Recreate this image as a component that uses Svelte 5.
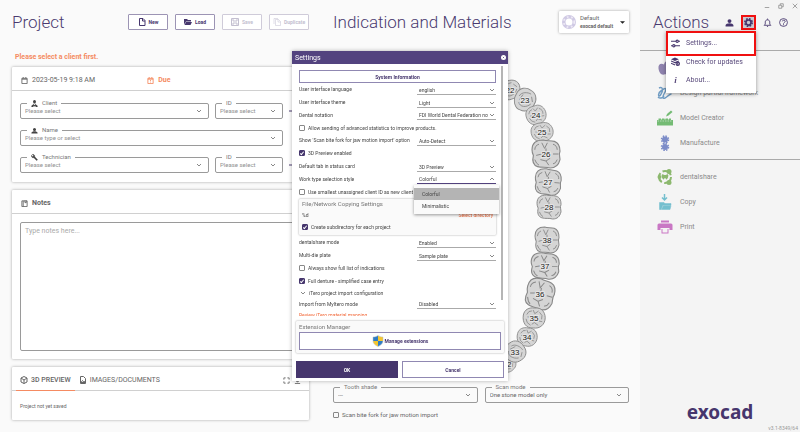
<script>
	let theme = $state('Light');
	let workStyle = $state('Colorful');
	let listOpen = $state(true);
	let menuOpen = $state(true);
	let dialogOpen = $state(true);
	let notes = $state('');
	let biteFork = $state(false);

	const teeth = [
		{ n: 32, x: 187, y: 320, rx: 9, ry: 9, kind: 'front', turn: 30 },
		{ n: 22, x: 190, y: 46, rx: 11, ry: 10, kind: 'front', turn: -25 },
		{ n: 23, x: 205, y: 56, rx: 11, ry: 12, kind: 'front', turn: 15 },
		{ n: 24, x: 216, y: 71, rx: 10, ry: 10, kind: 'small', turn: -10 },
		{ n: 25, x: 222, y: 88, rx: 11, ry: 10, kind: 'small', turn: 0 },
		{ n: 26, x: 226, y: 110, rx: 14, ry: 14, kind: 'molar', turn: 0 },
		{ n: 27, x: 228, y: 138, rx: 13, ry: 13, kind: 'molar', turn: 5 },
		{ n: 28, x: 229, y: 163, rx: 12, ry: 12, kind: 'molar', turn: 0 },
		{ n: 38, x: 227, y: 196, rx: 12, ry: 13, kind: 'molar', turn: 0 },
		{ n: 37, x: 225, y: 222, rx: 14, ry: 13, kind: 'molar', turn: 3 },
		{ n: 36, x: 220, y: 250, rx: 14, ry: 15, kind: 'molar', turn: 15 },
		{ n: 35, x: 214, y: 274, rx: 11, ry: 11, kind: 'small', turn: 10 },
		{ n: 34, x: 207, y: 293, rx: 10, ry: 10, kind: 'small', turn: 15 },
		{ n: 33, x: 195, y: 308, rx: 11, ry: 11, kind: 'front', turn: 40 },
	];

	const outlines = {
		front: 'M-9-3C-8-9-2-11 3-9 8-8 11-3 9 2 8 7 3 10-2 9-7 9-11 3-9-3Z',
		small: 'M-10-1C-10-6-6-9-1-9 5-11 9-7 10-2 11 4 7 9 1 9-5 11-10 6-10-1Z',
		molar: 'M-10-3C-10-8-7-10-2-10 1-9 3-10 6-9 9-8 10-6 10-2 9 0 10 2 10 4 9 8 7 10 3 10 0 9-3 10-6 9-9 8-10 5-9 1Q-10-1-10-3Z',
	};

	const creases = {
		front: 'M-6-2C-5-6 1-7 4-6M-5 3C-3 7 3 6 6 2M5-4L7 0M-3-4L-5 1',
		small: 'M-7-2Q-6-6-3-6M-2-7L0-4 3-7M4-6Q8-4 7 0M-7 2Q-6 6-2 7M-1 6L1 4 5 6M-6 0H-3M5 2H8',
		molar: 'M-8-3Q-8-6-5-7M-3-8L-1-4 1-8M0-4V-2M5-7Q8-6 8-3M-8 4Q-7 7-5 8M-4 4L0 5 2 8M0 5L3 3M5 7Q7 7 8 4M-7 1L-3 0M5 0H9',
	};

	// the open menu hides the first entry, so it has no caption of its own
	const actions = [
		{ icon: 'apple', label: '', color: '#8f83ae' },
		{ icon: 'partial', label: 'Design partial framework', color: '#6f9bc2' },
		{ icon: 'model', label: 'Model Creator', color: '#74bb74' },
		{ icon: 'make', label: 'Manufacture', color: '#7c8cc8' },
	];
	const sharing = [
		{ icon: 'share', label: 'dentalshare', color: '#8cb86e' },
		{ icon: 'copy', label: 'Copy', color: '#74bfce' },
		{ icon: 'print', label: 'Print', color: '#c977c4' },
	];
</script>

{#snippet chevron()}
	<svg class="chev" viewBox="0 0 8 8" aria-hidden="true"><path d="M2 3l2 2 2-2" /></svg>
{/snippet}

{#snippet personIcon()}
	<path d="M8 2a3.500 3.500 0 1 0 0 7 3.500 3.500 0 0 0 0-7zM1 15v-2c0-2 4-3.500 7-3.500s7 1.500 7 3.500v2z" fill="currentColor" />
{/snippet}

{#snippet field(id, label, icon, value)}
	<fieldset class="field">
		<legend>
			{#if icon}
				<svg class="legend-icon" viewBox="0 0 16 16" aria-hidden="true">
					{#if icon === 'person'}
						{@render personIcon()}
					{:else if icon === 'client'}
						<path d="M8 0a3.500 3.500 0 0 0-3 5l1 3h4l1-3a3.500 3.500 0 0 0-3-5zM1 16v-3l5-4 2 3 2-3 5 4v3h-5l1-3-3 2-3-2 1 3z" fill="currentColor" />
					{:else}
						<path d="M15 13L8.500 6.500A4.500 4.500 0 0 0 3 1l3 3-2 2-3-3a4.500 4.500 0 0 0 5.500 5.500L13 15z" fill="currentColor" stroke="currentColor" />
					{/if}
				</svg>
			{/if}
			<label for={id}>{label}</label>
		</legend>
		<div class="picker">
			<select {id}><option>{value}</option></select>
			{@render chevron()}
		</div>
	</fieldset>
{/snippet}

{#snippet row(id, label, value)}
	<div class="row">
		<label for={id}>{label}</label>
		<div class="line-select">
			<select {id}><option>{value}</option></select>
			{@render chevron()}
		</div>
	</div>
{/snippet}

{#snippet check(label, checked)}
	<label class="check"><input type="checkbox" {checked} />{label}</label>
{/snippet}

{#snippet action(item)}
	<li>
		<button class="action">
			<svg viewBox="0 0 32 32" style="color: {item.color}" aria-hidden="true">
				{#if item.icon === 'apple'}
					<path d="M14 9C7 5 2 10 3 17c1 8 6 14 11 12 3-1 4-1 7 0 6 0 9-9 9-13 0-6-6-10-12-7 0-4 2-5 3-7-4 0-6 3-7 7z" fill="currentColor" />
				{:else if item.icon === 'partial'}
					<path d="M4 6c8-4 9 6 3 14-5 6-6-4 2-9 8-6 11-5 7 3-5 9-6 14 0 12 5-2 8-8 13-8M2 24c4 4 9 2 12-2M19 7c6-3 9 1 5 6" fill="none" stroke="currentColor" stroke-width="3" />
				{:else if item.icon === 'model'}
					<path d="M0 20h3v-3h5v2h2v-2h5v2h2v-2h5v2h2v-2h4v3h4v11H0z" fill="currentColor" />
					<path d="M18 13l2-5 8-7 3 3-8 7z" fill="currentColor" />
					<path d="M1 22h30" stroke="#f4f4f4" stroke-dasharray="3 2" />
				{:else if item.icon === 'make'}
					<circle cx="16" cy="9" r="6" fill="currentColor" />
					<circle cx="16" cy="9" r="7" fill="none" stroke="currentColor" stroke-width="3" stroke-dasharray="3 2.500" />
					<circle cx="16" cy="24" r="6" fill="currentColor" />
					<circle cx="16" cy="24" r="7" fill="none" stroke="currentColor" stroke-width="3" stroke-dasharray="3 2.500" />
				{:else if item.icon === 'share'}
					<circle cx="16" cy="16" r="12" fill="none" stroke="currentColor" stroke-width="4" stroke-dasharray="20 5" />
					<circle cx="5" cy="16" r="4" fill="currentColor" />
					<circle cx="24" cy="5" r="5" fill="currentColor" />
					<circle cx="24" cy="27" r="5" fill="currentColor" />
					<path d="M10 11c2-2 4 1 6 1s4-3 6-1-1 10-3 10-1-3-3-3-1 3-3 3-5-8-3-10z" fill="currentColor" />
				{:else if item.icon === 'copy'}
					<path d="M15 0v11M10 7l5 5 5-5" fill="none" stroke="currentColor" stroke-width="3" />
					<path d="M5 31V17h9l2 2h12v3H12L8 31zM9 31l4-8h15l-2 8z" fill="currentColor" stroke="currentColor" />
				{:else}
					<path d="M8 3h16v4H8zM4 9h24q3 0 3 3v10h-6v-4H7v4H1V12q0-3 3-3zM9 20h14v9H9z" fill="currentColor" />
					<path d="M11 20h10v7H11z" fill="#f4f4f4" />
				{/if}
			</svg>
			{item.label}
		</button>
	</li>
{/snippet}

<div class="app">
	<section class="project">
		<header class="head">
			<h1>Project</h1>
			<div class="toolbar">
				<button>
					<svg viewBox="0 0 16 16" aria-hidden="true"><path d="M3 1h7l4 4v10H3zM9 1v5h5" fill="none" stroke="currentColor" stroke-width="2" /></svg>
					New
				</button>
				<button>
					<svg viewBox="0 0 16 16" aria-hidden="true"><path d="M0 13V2h6l2 2h6v3H4zM1 14l3-6h12l-3 6z" fill="currentColor" /></svg>
					Load
				</button>
				<button disabled>
					<svg viewBox="0 0 16 16" aria-hidden="true"><path d="M1 1h14v14H1zM4 1v5h8V1M4 15v-5h8v5" fill="none" stroke="currentColor" stroke-width="2" /></svg>
					Save
				</button>
				<button disabled>
					<svg viewBox="0 0 16 16" aria-hidden="true"><path d="M5 3h6l4 4v8H5zM2 12V1h8M10 3v5h5" fill="none" stroke="currentColor" /></svg>
					Duplicate
				</button>
			</div>
		</header>

		<p class="warning">Please select a client first.</p>

		<div class="card">
			<div class="card-head dates">
				<span>
					<svg viewBox="0 0 16 16" aria-hidden="true"><path d="M2 3h12v12H2zM2 5h12M5 0v3M11 0v3" fill="none" stroke="currentColor" stroke-width="2" /></svg>
					2023-05-19 9:18 AM
				</span>
				<span class="due">
					<svg viewBox="0 0 16 16" aria-hidden="true"><path d="M2 3h12v12H2zM2 5h12M5 0v3M11 0v3M8 7v3M8 12v1" fill="none" stroke="currentColor" stroke-width="2" /></svg>
					Due
				</span>
			</div>
			<div class="fields">
				<div class="pair">
					{@render field('client', 'Client', 'client', 'Please select')}
					{@render field('client-id', 'ID', '', 'Please select')}
					<button class="add" aria-label="Add client">
						<svg viewBox="0 0 8 8" aria-hidden="true"><path d="M0 4h8M4 0v8" /></svg>
					</button>
				</div>
				<div class="pair single">
					{@render field('name', 'Name', 'person', 'Please type or select')}
				</div>
				<div class="pair">
					{@render field('technician', 'Technician', 'wrench', 'Please select')}
					{@render field('technician-id', 'ID', '', 'Please select')}
					<button class="add" aria-label="Add technician">
						<svg viewBox="0 0 8 8" aria-hidden="true"><path d="M0 4h8M4 0v8" /></svg>
					</button>
				</div>
			</div>
		</div>

		<div class="card notes">
			<div class="card-head">
				<svg viewBox="0 0 16 16" aria-hidden="true"><path d="M2 2h12v13H2zM5 2v13M9 1v5h3V1" fill="none" stroke="currentColor" stroke-width="2" /></svg>
				<label for="notes">Notes</label>
			</div>
			<textarea id="notes" placeholder="Type notes here..." bind:value={notes}></textarea>
		</div>

		<div class="card preview">
			<div class="tabs">
				<button class="tab active">
					<svg viewBox="0 0 16 16" aria-hidden="true"><path d="M8 1l6 3v8l-6 3-6-3V4zM2 4l6 4 6-4M8 8v7" fill="none" stroke="currentColor" stroke-width="2" /></svg>
					3D PREVIEW
				</button>
				<button class="tab">
					<svg viewBox="0 0 16 16" aria-hidden="true"><path d="M3 1h6l4 4v10H3zM4 13l3-4 2 2 1-1 2 3z" fill="none" stroke="currentColor" stroke-width="2" /></svg>
					IMAGES/DOCUMENTS
				</button>
				<button class="tool" aria-label="Full screen">
					<svg viewBox="0 0 16 16" aria-hidden="true"><path d="M2 6V2h4M10 2h4v4M14 10v4h-4M6 14H2v-4" fill="none" stroke="currentColor" stroke-width="2" /></svg>
				</button>
				<button class="tool" aria-label="Preview options">
					<svg viewBox="0 0 16 16" aria-hidden="true"><path d="M8 2v9M4 8l4 4 4-4M2 15h12" fill="none" stroke="currentColor" stroke-width="2" /></svg>
				</button>
			</div>
			<p>Project not yet saved</p>
		</div>
	</section>

	<section class="indication">
		<header class="head">
			<h1>Indication and Materials</h1>
			<button class="template">
				<svg class="disc" viewBox="0 0 16 16" aria-hidden="true">
					<circle cx="8" cy="8" r="6" />
					<circle class="holes" cx="8" cy="8" r="6" />
				</svg>
				<span>Default<b>exocad default</b></span>
				<svg class="drop" viewBox="0 0 8 8" aria-hidden="true"><path d="M0 2h8L4 6z" /></svg>
			</button>
		</header>

		<svg class="teeth" viewBox="0 0 320 339" aria-label="Tooth chart">
			{#each teeth as t}
				<g transform="translate({t.x} {t.y})">
					<g transform="rotate({t.turn}) scale({t.rx / 10} {t.ry / 10})">
						<path class="outline" d={outlines[t.kind]} />
						<path class="crease" d={creases[t.kind]} />
					</g>
					<text y="3">{t.n}</text>
				</g>
			{/each}
		</svg>

		<div class="scan">
			{@render field('shade', 'Tooth shade', '', '---')}
			{@render field('scan-mode', 'Scan mode', '', 'One stone model only')}
		</div>
		<label class="check bite">
			<input type="checkbox" bind:checked={biteFork} />Scan bite fork for jaw motion import
		</label>
	</section>

	<aside>
		<header class="head">
			<div class="window-buttons">
				<button aria-label="Minimize"><svg viewBox="0 0 8 8"><path d="M1 6h6" /></svg></button>
				<button aria-label="Restore"><svg viewBox="0 0 8 8"><path d="M1 3h4v4H1zM3 3V1h4v4H5" /></svg></button>
				<button aria-label="Close"><svg viewBox="0 0 8 8"><path d="M1 1l6 6M7 1L1 7" /></svg></button>
			</div>
			<h1>Actions</h1>
			<div class="icons">
				<button aria-label="User"><svg viewBox="0 0 16 16">{@render personIcon()}</svg></button>
				<div class="gear-wrap">
					<button class="gear" aria-label="Options" aria-expanded={menuOpen} onclick={() => (menuOpen = !menuOpen)}>
						<svg viewBox="0 0 16 16">
							<circle cx="8" cy="8" r="4.500" fill="none" stroke="currentColor" stroke-width="3" />
							<circle cx="8" cy="8" r="6.500" fill="none" stroke="currentColor" stroke-width="3" stroke-dasharray="3 2.100" />
						</svg>
					</button>
					{#if menuOpen}
						<div class="menu">
							<button class="marked" onclick={() => (dialogOpen = true)}>
								<svg viewBox="0 0 16 16" aria-hidden="true"><path d="M0 4h9M13 4h3M0 12h3M7 12h9" /><circle cx="11" cy="4" r="2" /><circle cx="5" cy="12" r="2" /></svg>
								Settings...
							</button>
							<button>
								<svg viewBox="0 0 16 16" aria-hidden="true"><path class="solid" d="M0 4l7-3 7 3-7 3zM0 6l7 3 7-3v2l-7 3-7-3zM0 10l7 3v2l-7-3z" /><circle cx="12" cy="12" r="3" /><path d="M12 10v3l1 1" /></svg>
								Check for updates
							</button>
							<button>
								<i>i</i>
								About...
							</button>
						</div>
					{/if}
				</div>
				<button aria-label="Notifications"><svg viewBox="0 0 16 16"><path d="M2 13h12l-2-2V7c0-5-8-5-8 0v4zM8 1v2M7 15h2" fill="none" stroke="currentColor" stroke-width="1.500" /></svg></button>
				<button aria-label="Help"><svg viewBox="0 0 16 16"><path d="M6 6c0-3 5-3 5 0 0 2-3 2-3 4M8 11v2" fill="none" stroke="currentColor" stroke-width="1.500" /><circle cx="8" cy="8" r="7" fill="none" stroke="currentColor" stroke-width="1.500" /></svg></button>
			</div>
		</header>
		<ul class="first">
			{#each actions as item}
				{@render action(item)}
			{/each}
		</ul>
		<ul>
			{#each sharing as item}
				{@render action(item)}
			{/each}
		</ul>
		<footer>
			<strong>exocad</strong>
			<small>v3.1-8349/64</small>
		</footer>
	</aside>
</div>

{#if dialogOpen}
	<div class="overlay">
		<div class="dialog" role="dialog" aria-labelledby="dialog-title">
			<div class="title">
				<h2 id="dialog-title">Settings</h2>
				<button aria-label="Close settings" onclick={() => (dialogOpen = false)}>
					<svg viewBox="0 0 8 8"><circle cx="4" cy="4" r="4" /><path d="M3 3l2 2M5 3L3 5" /></svg>
				</button>
			</div>
			<div class="scroll">
				<button class="outlined">System Information</button>
				<div class="rows main">
					{@render row('language', 'User interface language', 'english')}
					{@render row('theme', 'User interface theme', theme)}
					{@render row('notation', 'Dental notation', 'FDI World Dental Federation notation')}
					{@render check('Allow sending of advanced statistics to improve products.', false)}
					{@render row('jaw', "Show 'Scan bite fork for jaw motion import' option", 'Auto-Detect')}
					{@render check('3D Preview enabled', true)}
					{@render row('tab', 'Default tab in status card', '3D Preview')}
					<div class="row">
						<span id="work-label">Work type selection style</span>
						<div class="line-select open">
							<button aria-labelledby="work-label" aria-expanded={listOpen} onclick={() => (listOpen = !listOpen)}>
								{workStyle}
								<svg class="chev" viewBox="0 0 8 8" aria-hidden="true"><path d="M2 5l2-2 2 2" /></svg>
							</button>
							{#if listOpen}
								<div class="list">
									{#each ['Colorful', 'Minimalistic'] as name}
										<button class:chosen={name === workStyle} onclick={() => (workStyle = name)}>{name}</button>
									{/each}
								</div>
							{/if}
						</div>
					</div>
					{@render check('Use smallest unassigned client ID as new client', false)}
				</div>
				<div class="group">
					<h3>File/Network Copying Settings</h3>
					<div class="path"><span>%d</span><a href="#directory">Select directory</a></div>
					{@render check('Create subdirectory for each project', true)}
				</div>
				<div class="rows more">
					{@render row('share-mode', 'dentalshare mode', 'Enabled')}
					{@render row('plate', 'Multi-die plate', 'Sample plate')}
					{@render check('Always show full list of indications', false)}
					{@render check('Full denture - simplified case entry', true)}
				</div>
				<div class="rows last">
					<button class="expand">{@render chevron()}iTero project import configuration</button>
					{@render row('myitero', 'Import from MyItero mode', 'Disabled')}
					<a href="#mapping">Review iTero material mapping</a>
				</div>
				<div class="thumb"></div>
			</div>
			<div class="group manager">
				<h3>Extension Manager</h3>
				<button class="outlined">
					<svg viewBox="0 0 24 24" aria-hidden="true">
						<path d="M12 1C9 3 5 4 2 4v8h10z" fill="#2f7dc4" />
						<path d="M12 1c3 2 7 3 10 3v8H12z" fill="#f4c62f" />
						<path d="M2 12c0 5 5 9 10 11V12z" fill="#f4c62f" />
						<path d="M22 12c0 5-5 9-10 11V12z" fill="#2f7dc4" />
						<path d="M12 1C9 3 5 4 2 4v8c0 5 5 9 10 11 5-2 10-6 10-11V4c-3 0-7-1-10-3z" fill="none" stroke="#b9bcc0" />
					</svg>
					Manage extensions
				</button>
			</div>
			<div class="buttons">
				<button class="ok" onclick={() => (dialogOpen = false)}>OK</button>
				<button class="outlined" onclick={() => (dialogOpen = false)}>Cancel</button>
			</div>
		</div>
	</div>
{/if}

<style>
	:global(body) {
		margin: 0;
		background: #fafafa;
	}
	.app,
	.overlay {
		font-family: Roboto, 'Liberation Sans', sans-serif;
		font-size: 6px;
		line-height: 8px;
		color: #666;
	}
	.app *,
	.overlay * {
		box-sizing: border-box;
	}
	.app {
		display: grid;
		grid-template-columns: minmax(0, 1fr) minmax(0, 1fr) 20%;
		min-height: 100vh;
	}
	button,
	select,
	textarea {
		font: inherit;
		color: inherit;
		background: none;
		border: 0;
		padding: 0;
		margin: 0;
		border-radius: 0;
	}
	button {
		display: flex;
		align-items: center;
		cursor: pointer;
	}
	select {
		appearance: none;
		flex: 1;
		min-width: 0;
		outline: none;
	}
	svg {
		display: block;
		flex: none;
	}
	p,
	h1,
	h2,
	h3,
	ul {
		margin: 0;
		padding: 0;
		font-weight: 400;
	}
	h1 {
		font-size: 17px;
		line-height: 20px;
		font-weight: 300;
		color: #4a3a70;
		white-space: nowrap;
	}
	.head {
		display: flex;
		align-items: center;
		justify-content: space-between;
		height: 44px;
	}
	.project {
		display: flex;
		flex-direction: column;
		padding: 0 11px 12px 12px;
	}
	.toolbar {
		display: flex;
		gap: 7px;
	}
	.toolbar button {
		justify-content: center;
		gap: 3px;
		width: 40px;
		height: 16px;
		border: 1px solid #9c94b4;
		border-radius: 1px;
		font-size: 5px;
		font-weight: 700;
		color: #46366d;
		background: #fff;
	}
	.toolbar button:disabled {
		color: #c3bfd0;
		border-color: #cfcbd9;
	}
	.toolbar svg {
		width: 8px;
		height: 8px;
	}
	.warning {
		margin: 8px 3px 5px;
		line-height: 10px;
		font-size: 7px;
		font-weight: 700;
		color: #f58b62;
	}
	.card {
		background: #fff;
		border-radius: 1px;
		box-shadow: 0 0 3px rgba(0, 0, 0, 0.35);
	}
	.card-head {
		display: flex;
		align-items: center;
		gap: 4px;
		height: 24px;
		padding: 3px 9px 0;
		border-bottom: 1px solid #d0d0d0;
		font-size: 7px;
		font-weight: 700;
	}
	.card-head svg {
		width: 7px;
		height: 7px;
	}
	.dates {
		font-weight: 400;
	}
	.dates span {
		display: flex;
		align-items: center;
		gap: 4px;
		flex: 4;
	}
	.dates .due {
		flex: 5;
		font-weight: 700;
		color: #f58b62;
	}
	.fields {
		display: grid;
		gap: 7px;
		padding: 8px 8px 9px;
	}
	.pair {
		display: grid;
		grid-template-columns: minmax(0, 1fr) 68px 12px;
		gap: 6px;
	}
	.pair.single {
		grid-template-columns: minmax(0, 1fr) 12px;
	}
	.field {
		min-width: 0;
		height: 20px;
		margin: 0;
		padding: 0 5px 0 4px;
		border: 1px solid #9a9a9a;
		border-radius: 2px;
	}
	.field legend {
		display: flex;
		align-items: center;
		gap: 4px;
		margin-left: 2px;
		padding: 0 4px;
		color: #777;
	}
	.legend-icon {
		width: 7px;
		height: 7px;
		color: #444;
	}
	.picker {
		display: flex;
		align-items: center;
		height: 8px;
	}
	.fields select {
		color: #909090;
	}
	.chev {
		width: 8px;
		height: 8px;
		pointer-events: none;
	}
	.chev path {
		fill: none;
		stroke: #888;
	}
	.add {
		padding-top: 4px;
		color: #4a3a70;
	}
	.add svg {
		width: 8px;
		height: 8px;
	}
	.add path {
		stroke: currentColor;
	}
	.notes {
		display: flex;
		flex-direction: column;
		flex: 1;
		margin: 8px 0;
	}
	textarea {
		flex: 1;
		margin: 8px;
		padding: 4px;
		border: 1px solid #9a9a9a;
		border-radius: 2px;
		font-size: 7px;
		resize: none;
	}
	textarea::placeholder {
		color: #aaa;
	}
	.tabs {
		display: flex;
		height: 24px;
		padding: 0 8px 0 4px;
		border-bottom: 1px solid #d0d0d0;
	}
	.tab {
		gap: 3px;
		height: 24px;
		padding: 3px 4px 0;
		font-size: 7px;
		border-bottom: 1px solid transparent;
	}
	.tab.active {
		font-weight: 500;
		border-bottom: 1px solid #f58b62;
	}
	.tab svg {
		width: 8px;
		height: 8px;
	}
	.tool {
		margin-left: 4px;
		padding-top: 3px;
	}
	.tab + .tool {
		margin-left: auto;
	}
	.tool svg {
		width: 7px;
		height: 7px;
	}
	.preview p {
		padding: 11px 8px 10px;
		font-size: 5px;
	}
	.indication {
		display: flex;
		flex-direction: column;
		padding: 0 11px 13px 13px;
	}
	.template {
		gap: 4px;
		width: 70px;
		height: 22px;
		padding: 0 4px 0 3px;
		background: #fff;
		border-radius: 1px;
		box-shadow: 0 0 3px rgba(0, 0, 0, 0.35);
		text-align: left;
	}
	.template span {
		flex: 1;
		white-space: nowrap;
	}
	.template b {
		display: block;
		font-size: 5px;
	}
	.disc {
		width: 14px;
		height: 14px;
		fill: #fff;
		stroke: #d0cae4;
		stroke-width: 4;
	}
	.holes {
		fill: none;
		stroke: #eeeaf6;
		stroke-width: 2;
		stroke-dasharray: 2 3;
	}
	.drop {
		width: 5px;
		height: 5px;
		fill: #222;
	}
	.teeth {
		flex: 1;
		min-height: 0;
		margin: 0 -11px 0 -13px;
	}
	.outline {
		fill: #d5d5d5;
		stroke: #888;
		stroke-width: 0.8;
	}
	.crease {
		fill: none;
		stroke: #888;
		stroke-width: 0.7;
	}
	.teeth text {
		font: 8px 'Liberation Sans', Arial, sans-serif;
		text-anchor: middle;
		fill: #222;
		stroke: #e8e8e8;
		stroke-width: 2;
		paint-order: stroke;
	}
	.scan {
		display: grid;
		grid-template-columns: 1fr 1fr;
		gap: 7px;
	}
	.check {
		display: flex;
		align-items: center;
		gap: 3px;
		white-space: nowrap;
	}
	.check input {
		appearance: none;
		display: grid;
		place-items: center;
		flex: none;
		width: 6px;
		height: 6px;
		margin: 0;
		border: 1px solid #888;
		border-radius: 1px;
	}
	.check input:checked {
		background: #46366d;
		border-color: #46366d;
	}
	.check input:checked::after {
		content: '';
		width: 2px;
		height: 4px;
		border: solid #fff;
		border-width: 0 1px 1px 0;
		box-sizing: border-box;
		transform: rotate(40deg);
	}
	.bite {
		margin-top: 8px;
	}
	aside {
		display: flex;
		flex-direction: column;
		background: #f4f4f4;
	}
	aside .head {
		position: relative;
		height: 51px;
		padding: 0 12px 6px 13px;
		border-bottom: 1px solid #aaa;
	}
	.window-buttons {
		position: absolute;
		top: 3px;
		right: 2px;
		display: flex;
		gap: 8px;
		color: #888;
	}
	.window-buttons svg {
		width: 6px;
		height: 6px;
		fill: none;
		stroke: currentColor;
	}
	.icons {
		display: flex;
		align-items: center;
		gap: 7px;
		color: #46366d;
	}
	.icons svg {
		width: 9px;
		height: 9px;
	}
	.gear-wrap {
		position: relative;
	}
	.gear {
		justify-content: center;
		width: 15px;
		height: 15px;
		border: 2px solid #f01010;
		background: #c9c9d0;
	}
	.menu {
		position: absolute;
		z-index: 1;
		top: 16px;
		right: 0;
		width: 90px;
		padding-bottom: 4px;
		background: #fff;
		box-shadow: 0 1px 4px rgba(0, 0, 0, 0.4);
	}
	.menu button {
		gap: 6px;
		width: 100%;
		height: 18px;
		padding: 0 5px;
		font-size: 7px;
		color: #5a4b7c;
	}
	.menu .marked {
		height: 25px;
		margin-bottom: -3px;
		border: 2px solid #f01010;
		padding: 0 3px;
	}
	.menu svg {
		fill: none;
		stroke: #46366d;
		stroke-width: 2;
	}
	.menu svg .solid {
		fill: #46366d;
		stroke: none;
	}
	.menu i {
		width: 9px;
		text-align: center;
		font-family: 'Liberation Serif', serif;
		font-size: 9px;
		font-weight: 700;
	}
	aside ul {
		padding: 4px 0;
		list-style: none;
	}
	.first {
		border-bottom: 1px solid #aaa;
	}
	.action {
		gap: 7px;
		width: 100%;
		height: 25px;
		padding: 0 17px;
		font-size: 7px;
		color: #8a8a8a;
		white-space: nowrap;
	}
	.action svg {
		width: 16px;
		height: 16px;
	}
	footer {
		display: flex;
		flex-direction: column;
		align-items: center;
		margin-top: auto;
		color: #46366d;
	}
	footer strong {
		font-family: 'Noto Sans', 'Open Sans', sans-serif;
		font-size: 19px;
		line-height: 24px;
	}
	footer small {
		align-self: flex-end;
		padding-right: 2px;
		font-size: 5px;
		color: #999;
	}
	.overlay {
		position: fixed;
		inset: 0;
		display: grid;
		place-items: center;
		pointer-events: none;
		font-size: 5px;
		color: #444;
	}
	.dialog {
		width: 216px;
		background: #fff;
		box-shadow: 0 0 4px rgba(0, 0, 0, 0.3);
		pointer-events: auto;
	}
	.title {
		display: flex;
		align-items: center;
		justify-content: space-between;
		height: 13px;
		padding: 0 2px 0 3px;
		color: #fff;
		background: #53437f;
	}
	.title h2 {
		font-size: 7px;
		font-weight: 400;
	}
	.title svg {
		width: 5px;
		height: 5px;
		fill: #fff;
	}
	.title path {
		stroke: #53437f;
	}
	.scroll {
		position: relative;
		height: 252px;
		padding: 6px 12px 0 7px;
		overflow: hidden;
	}
	.thumb {
		position: absolute;
		top: 2px;
		right: 5px;
		width: 2px;
		height: 234px;
		background: #b5b5b5;
	}
	.outlined {
		justify-content: center;
		gap: 1px;
		width: 100%;
		height: 13px;
		border: 1px solid #9088b2;
		font-weight: 700;
		color: #46366d;
		background: #fff;
	}
	.rows {
		display: grid;
		grid-auto-rows: 1fr;
		align-items: center;
	}
	.main {
		height: 115px;
	}
	.more {
		height: 51px;
	}
	.last {
		height: 34px;
	}
	.row {
		display: flex;
		align-items: center;
		justify-content: space-between;
		white-space: nowrap;
	}
	.line-select {
		position: relative;
		display: flex;
		align-items: center;
		width: 79px;
		height: 11px;
		padding: 2px 0 0 2px;
		border-bottom: 1px solid #aaa;
	}
	.line-select.open {
		border-color: #53437f;
	}
	.line-select > button {
		flex: 1;
		justify-content: space-between;
	}
	.list {
		position: absolute;
		z-index: 1;
		top: 12px;
		left: -3px;
		right: -3px;
		padding: 3px 0 2px;
		background: #fafafa;
		box-shadow: 0 1px 3px rgba(0, 0, 0, 0.4);
	}
	.list button {
		width: 100%;
		height: 12px;
		padding-left: 8px;
	}
	.list .chosen {
		background: #b4b4b4;
	}
	.group {
		margin: 1px 0;
		padding: 1px 3px;
		border-radius: 1px;
		background: #fafafa;
		box-shadow: 0 0 2px rgba(0, 0, 0, 0.4);
	}
	.scroll .group {
		height: 36px;
	}
	.group h3 {
		font-size: 6px;
		color: #777;
	}
	.path {
		display: flex;
		align-items: center;
		justify-content: space-between;
		height: 13px;
	}
	.group .check {
		height: 12px;
	}
	a {
		color: #f2693a;
		text-decoration: none;
	}
	.expand {
		gap: 2px;
	}
	.manager {
		margin: 5px 4px 0;
		padding: 2px 3px 3px;
	}
	.manager .outlined {
		height: 18px;
		margin-top: 1px;
	}
	.manager svg {
		width: 12px;
		height: 12px;
	}
	.buttons {
		display: grid;
		grid-template-columns: 1fr 1fr;
		gap: 4px;
		padding: 8px 4px 3px;
	}
	.buttons button {
		height: 17px;
		justify-content: center;
	}
	.buttons .ok {
		font-weight: 700;
		color: #fff;
		background: #46366d;
	}
</style>
